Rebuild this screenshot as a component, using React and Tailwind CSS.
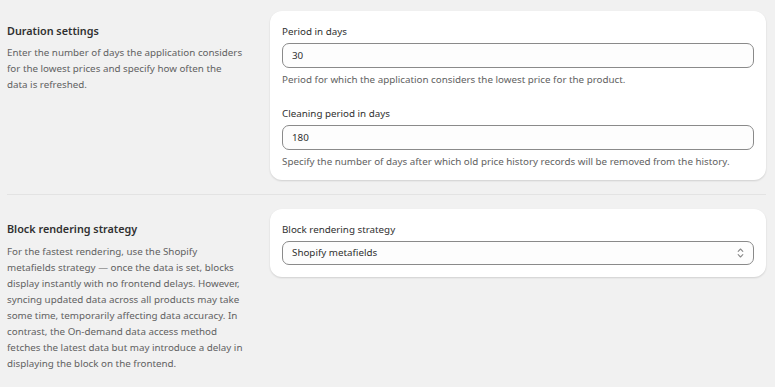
import React from 'react';

const font = { fontFamily: '"Noto Sans", "Open Sans", sans-serif' };

const Lines = ({ lines }) =>
    lines.map((line, i) => (
        <span key={i} className="block whitespace-nowrap">
            {line}
        </span>
    ));

const Field = ({ label, value, help, className = '' }) => (
    <div className={className}>
        <label className="block text-[9.8px] leading-[16px] text-[#303030] mb-[3px]">{label}</label>
        <input
            type="text"
            defaultValue={value}
            className="block w-full h-[25px] rounded-[7px] border border-[#8a8a8a] bg-[#fdfdfd] px-[9px] text-[9.8px] text-[#303030] outline-none"
        />
        <p className="mt-[4px] text-[9.8px] leading-[16px] text-[#616161]">{help}</p>
    </div>
);

const App = () => {
    return (
        <div className="min-h-screen bg-[#f1f1f1] pl-[7px] pr-[9px] pt-[11px]" style={font}>
            {/* Duration settings */}
            <div className="flex gap-[16px] items-start">
                <div className="w-[247px] shrink-0 pt-[12px]">
                    <h2 className="text-[10.8px] leading-[16px] font-semibold text-[#303030]">Duration settings</h2>
                    <p className="mt-[6px] text-[9.8px] leading-[16px] text-[#616161]">
                        <Lines
                            lines={[
                                'Enter the number of days the application considers',
                                'for the lowest prices and specify how often the',
                                'data is refreshed.',
                            ]}
                        />
                    </p>
                </div>
                <div className="flex-1 bg-white rounded-[12px] shadow-[0_1px_2px_rgba(0,0,0,0.14)] px-[12px] pt-[13px] pb-[10px]">
                    <Field label="Period in days" value="30" help="Period for which the application considers the lowest price for the product." />
                    <Field
                        className="mt-[18px]"
                        label="Cleaning period in days"
                        value="180"
                        help="Specify the number of days after which old price history records will be removed from the history."
                    />
                </div>
            </div>

            <div className="h-px bg-[#e3e3e3] mt-[14px] mb-[14px]" />

            {/* Block rendering strategy */}
            <div className="flex gap-[16px] items-start">
                <div className="w-[247px] shrink-0 pt-[12px]">
                    <h2 className="text-[10.8px] leading-[16px] font-semibold text-[#303030]">Block rendering strategy</h2>
                    <p className="mt-[7px] text-[9.8px] leading-[16px] text-[#616161]">
                        <Lines
                            lines={[
                                'For the fastest rendering, use the Shopify',
                                'metafields strategy — once the data is set, blocks',
                                'display instantly with no frontend delays. However,',
                                'syncing updated data across all products may take',
                                'some time, temporarily affecting data accuracy. In',
                                'contrast, the On-demand data access method',
                                'fetches the latest data but may introduce a delay in',
                                'displaying the block on the frontend.',
                            ]}
                        />
                    </p>
                </div>
                <div className="flex-1 bg-white rounded-[12px] shadow-[0_1px_2px_rgba(0,0,0,0.14)] px-[12px] pt-[13px] pb-[12px]">
                    <label className="block text-[9.8px] leading-[16px] text-[#303030] mb-[3px]">Block rendering strategy</label>
                    <div className="relative">
                        <select
                            defaultValue="metafields"
                            className="block w-full h-[24px] appearance-none rounded-[7px] border border-[#8a8a8a] bg-[#fdfdfd] px-[9px] text-[9.8px] text-[#303030] outline-none"
                        >
                            <option value="metafields">Shopify metafields</option>
                            <option value="ondemand">On-demand data access</option>
                        </select>
                        <svg className="pointer-events-none absolute right-[10px] top-1/2 -translate-y-1/2" width="7" height="11" viewBox="0 0 7 11" fill="none" stroke="#8a8a8a" strokeWidth="1.1" strokeLinecap="round" strokeLinejoin="round">
                            <path d="M1.2 3.8 3.5 1.5l2.3 2.3" />
                            <path d="M1.2 7.2 3.5 9.5l2.3-2.3" />
                        </svg>
                    </div>
                </div>
            </div>
        </div>
    );
};

export default App;
